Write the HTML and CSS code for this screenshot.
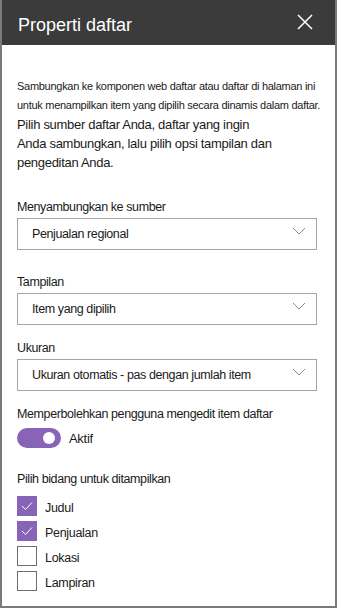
FILE: index.html
```html
<!DOCTYPE HTML>
<html>
  <head>
    <link rel="stylesheet" href="styles.css">
  </head>
  <body>
    <div class="panel">
      <div class="header">
        <h1 class="title">Properti daftar</h1>
        <svg class="close" width="16" height="16" viewBox="0 0 16 16">
          <path d="M1 1 L15 15 M15 1 L1 15" stroke="#ffffff" stroke-width="1.5" fill="none"/>
        </svg>
      </div>

      <div class="content">
        <p class="intro_small">Sambungkan ke komponen web daftar atau daftar di halaman ini<br>untuk menampilkan item yang dipilih secara dinamis dalam daftar.</p>
        <p class="intro">Pilih sumber daftar Anda, daftar yang ingin<br>Anda sambungkan, lalu pilih opsi tampilan dan<br>pengeditan Anda.</p>

        <div class="field first">
          <p class="label">Menyambungkan ke sumber</p>
          <div class="dropdown">
            <span>Penjualan regional</span>
            <svg class="chevron" width="14" height="8" viewBox="0 0 14 8"><path d="M1 1 L7 7 L13 1" stroke="#8a8a8a" stroke-width="1" fill="none"/></svg>
          </div>
        </div>

        <div class="field view">
          <p class="label">Tampilan</p>
          <div class="dropdown">
            <span>Item yang dipilih</span>
            <svg class="chevron" width="14" height="8" viewBox="0 0 14 8"><path d="M1 1 L7 7 L13 1" stroke="#8a8a8a" stroke-width="1" fill="none"/></svg>
          </div>
        </div>

        <div class="field">
          <p class="label">Ukuran</p>
          <div class="dropdown">
            <span>Ukuran otomatis - pas dengan jumlah item</span>
            <svg class="chevron" width="14" height="8" viewBox="0 0 14 8"><path d="M1 1 L7 7 L13 1" stroke="#8a8a8a" stroke-width="1" fill="none"/></svg>
          </div>
        </div>

        <div class="field">
          <p class="label">Memperbolehkan pengguna mengedit item daftar</p>
          <div class="toggle_row">
            <div class="toggle"><div class="knob"></div></div>
            <span>Aktif</span>
          </div>
        </div>

        <div class="field fields_list">
          <p class="label">Pilih bidang untuk ditampilkan</p>
          <div class="check_row">
            <div class="checkbox checked">
              <svg width="12" height="10" viewBox="0 0 12 10"><path d="M1 5 L4.5 8.5 L11 1.5" stroke="#ffffff" stroke-width="1" fill="none"/></svg>
            </div>
            <span>Judul</span>
          </div>
          <div class="check_row">
            <div class="checkbox checked">
              <svg width="12" height="10" viewBox="0 0 12 10"><path d="M1 5 L4.5 8.5 L11 1.5" stroke="#ffffff" stroke-width="1" fill="none"/></svg>
            </div>
            <span>Penjualan</span>
          </div>
          <div class="check_row">
            <div class="checkbox"></div>
            <span>Lokasi</span>
          </div>
          <div class="check_row">
            <div class="checkbox"></div>
            <span>Lampiran</span>
          </div>
        </div>
      </div>
    </div>
  </body>
</html>
```

FILE: styles.css
```css
* {
  box-sizing: border-box;
}

body {
  margin: 0;
  background-color: #ffffff;
  font-family: "Liberation Sans", Arial, sans-serif;
  color: #1a1a1a;
}

.panel {
  width: 337px;
  height: 608px;
  border: 2px solid #7a7a7a;
  border-top: none;
  background-color: #ffffff;
}

.header {
  height: 45px;
  background-color: #3b3b3b;
  display: flex;
  align-items: center;
  justify-content: space-between;
  padding: 0 22px 0 16px;
}

.title {
  margin: 5px 0 0 0;
  color: #ffffff;
  font-size: 18px;
  font-weight: normal;
}

.close {
  display: block;
  margin-top: -2px;
}

.content {
  padding: 32px 0 0 15px;
}

.intro_small {
  margin: 0;
  font-size: 11px;
  line-height: 19px;
  letter-spacing: -0.28px;
  white-space: nowrap;
}

.intro {
  margin: 0;
  font-size: 13px;
  line-height: 19px;
  letter-spacing: -0.3px;
  white-space: nowrap;
}

.field {
  margin-top: 14px;
}

.field.first {
  margin-top: 26px;
}

.field.view {
  margin-top: 23px;
}

.label {
  margin: 0 0 2px 0;
  font-size: 12.5px;
  line-height: 18px;
  letter-spacing: -0.4px;
}

.dropdown {
  width: 300px;
  height: 32px;
  border: 1px solid #a6a6a6;
  display: flex;
  align-items: center;
  justify-content: space-between;
  padding: 0 10px 0 14px;
  font-size: 12.5px;
  letter-spacing: -0.4px;
}

.chevron {
  display: block;
  margin-top: -6px;
}

.toggle_row {
  display: flex;
  align-items: center;
  margin-top: 5px;
  font-size: 13px;
  letter-spacing: -0.3px;
}

.toggle {
  width: 44px;
  height: 20px;
  border-radius: 10px;
  background-color: #8764b8;
  position: relative;
  margin-right: 8px;
}

.knob {
  position: absolute;
  top: 4px;
  right: 6px;
  width: 12px;
  height: 12px;
  border-radius: 50%;
  background-color: #ffffff;
}

.fields_list {
  margin-top: 22px;
}

.fields_list .label {
  margin-bottom: 8px;
}

.check_row {
  display: flex;
  align-items: center;
  height: 20px;
  margin-bottom: 5px;
  font-size: 12.5px;
  letter-spacing: -0.3px;
}

.checkbox {
  width: 20px;
  height: 20px;
  border: 1px solid #6e6e6e;
  margin-right: 8px;
  display: flex;
  align-items: center;
  justify-content: center;
}

.checkbox.checked {
  background-color: #8764b8;
  border-color: #8764b8;
}

.check_row span {
  margin-top: 4px;
}
```
